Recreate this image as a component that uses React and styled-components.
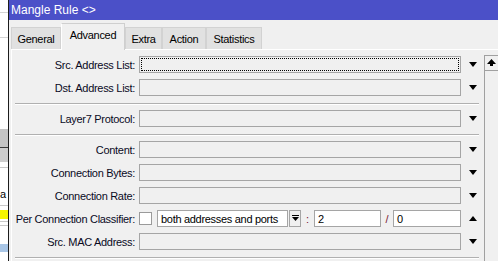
import React from 'react';
import styled, { createGlobalStyle } from 'styled-components';

const GlobalStyle = createGlobalStyle`
  * { box-sizing: border-box; }
  html, body { margin: 0; padding: 0; overflow: hidden; background: #fff; }
  body {
    font-family: "Liberation Sans", Arial, sans-serif;
    font-size: 11px;
    letter-spacing: -0.3px;
    color: #000;
  }
`;

const Desktop = styled.div`
  display: flex;
  width: 498px;
  height: 261px;
  overflow: hidden;
`;

// window lying behind the dialog, only a sliver shows
const BackWindow = styled.div`
  width: 8px;
  flex-shrink: 0;
  display: flex;
  flex-direction: column;
  background: #fff;
  overflow: hidden;
`;

const Band = styled.div`
  flex-shrink: 0;
  height: ${p => p.$h}px;
  background: ${p => p.$bg || '#fff'};
  border-bottom: ${p => (p.$line ? `1px solid ${p.$line}` : 'none')};
  font-size: 11px;
  line-height: ${p => p.$h}px;
  color: #000;
`;

const Window = styled.div`
  flex: 1;
  min-width: 0;
  display: flex;
  flex-direction: column;
  border-left: 1px solid #1c1c1c;
  background: #f0f0f0;
`;

const TitleBar = styled.div`
  height: 20px;
  flex-shrink: 0;
  display: flex;
  align-items: center;
  padding-left: 2px;
  background: #4b50c8;
  color: #fff;
  font-size: 12px;
  letter-spacing: 0;
`;

const TabStrip = styled.div`
  height: 29px;
  flex-shrink: 0;
  display: flex;
  align-items: flex-end;
  padding-left: 2px;
  position: relative;
  z-index: 1;
`;

const Tab = styled.div`
  width: ${p => p.$w}px;
  height: ${p => (p.$active ? 27 : 22)}px;
  margin-bottom: ${p => (p.$active ? -1 : 0)}px;
  display: flex;
  align-items: ${p => (p.$active ? 'flex-start' : 'center')};
  padding-top: ${p => (p.$active ? 5 : 0)}px;
  justify-content: center;
  background: ${p => (p.$active ? '#f0f0f0' : '#e1e1e1')};
  border: 1px solid ${p => (p.$active ? '#cfcfcf' : '#d2d2d2')};
  border-bottom: none;
  border-left: ${p => (p.$active ? '1px solid #fff' : '1px solid #d2d2d2')};
  white-space: nowrap;
`;

const Panel = styled.div`
  flex: 1;
  display: flex;
  margin-left: 2px;
  border-top: 1px solid #fff;
  border-left: 1px solid #fff;
`;

const Form = styled.div`
  flex: 1;
  display: flex;
  flex-direction: column;
  padding-top: 6px;
`;

const Row = styled.div`
  display: grid;
  grid-template-columns: 127px 322px 23px;
  align-items: center;
  height: 17px;
  margin-bottom: 6px;
  flex-shrink: 0;
`;

const Label = styled.div`
  text-align: right;
  padding-right: 4px;
  white-space: nowrap;
  color: #0a0a1e;
`;

const Field = styled.div`
  position: relative;
  height: 17px;
  border: 1px solid #a5a5a5;
  background: ${p => (p.$white ? '#fff' : '#f0f0f0')};
  display: flex;
  align-items: center;
  padding-left: 3px;
  white-space: nowrap;
  overflow: hidden;
  width: ${p => (p.$w ? `${p.$w}px` : 'auto')};
  flex: ${p => (p.$w ? '0 0 auto' : '1')};

  &::after {
    content: '';
    display: ${p => (p.$focus ? 'block' : 'none')};
    position: absolute;
    inset: 1px;
    border: 1px dotted #000;
  }
`;

const Arrow = styled.div`
  justify-self: center;
  width: 0;
  height: 0;
  margin-left: 1px;
  border-left: 4px solid transparent;
  border-right: 4px solid transparent;
  border-top: ${p => (p.$up ? 'none' : '5px solid #000')};
  border-bottom: ${p => (p.$up ? '5px solid #000' : 'none')};
`;

const Separator = styled.div`
  flex-shrink: 0;
  height: 2px;
  margin: 1px 5px 5px 3px;
  border-top: 1px solid #b0b0b0;
  border-bottom: 1px solid #fff;
`;

const Inline = styled.div`
  display: flex;
  align-items: center;
  height: 17px;
`;

const Check = styled.div`
  width: 13px;
  height: 13px;
  margin-right: 5px;
  background: #fff;
  border: 1px solid #9a9a9a;
  flex-shrink: 0;
`;

const DropButton = styled.div`
  width: 12px;
  height: 17px;
  margin-left: 1px;
  flex-shrink: 0;
  border: 1px solid #a5a5a5;
  background: #f0f0f0;
  display: flex;
  align-items: center;
  justify-content: center;
`;

const Divider = styled.div`
  width: ${p => p.$w}px;
  flex-shrink: 0;
  text-align: center;
  color: #7a2030;
`;

const ScrollBar = styled.div`
  width: 14px;
  flex-shrink: 0;
  margin-top: 5px;
  border-left: 1px solid #a0a0a0;
  border-top: 1px solid #a0a0a0;
`;

const ScrollButton = styled.div`
  height: 15px;
  border-bottom: 1px solid #a0a0a0;
  display: flex;
  align-items: center;
  justify-content: center;
`;

const tabs = [
  { name: 'General', w: 50 },
  { name: 'Advanced', w: 64, active: true },
  { name: 'Extra', w: 37 },
  { name: 'Action', w: 44 },
  { name: 'Statistics', w: 56 },
];

function SelectRow({ label, focus }) {
  return (
    <Row>
      <Label>{label}</Label>
      <Field $focus={focus} />
      <Arrow />
    </Row>
  );
}

export default function App() {
  return (
    <>
      <GlobalStyle />
      <Desktop>
        <BackWindow>
          <Band $h={13} $line="#d4d4d4" />
          <Band $h={25} $line="#d4d4d4" />
          <Band $h={91} />
          <Band $h={19} $bg="#c4c4c4" $line="#3a3a3a" />
          <Band $h={14} $bg="#cdcdcd" />
          <Band $h={6} $line="#c8c8c8" />
          <Band $h={20} />
          <Band $h={12}>a</Band>
          <Band $h={6} $line="#c8c8c8" />
          <Band $h={4} />
          <Band $h={9} $bg="#f5f500" />
          <Band $h={3} $line="#c8c8c8" />
          <Band $h={4} $line="#c8c8c8" />
          <Band $h={18} />
          <Band $h={8} $bg="#a9c6e6" />
        </BackWindow>

        <Window>
          <TitleBar>Mangle Rule &lt;&gt;</TitleBar>
          <TabStrip>
            {tabs.map(t => (
              <Tab key={t.name} $w={t.w} $active={t.active}>
                {t.name}
              </Tab>
            ))}
          </TabStrip>

          <Panel>
            <Form>
              <SelectRow label="Src. Address List:" focus />
              <SelectRow label="Dst. Address List:" />
              <Separator />
              <SelectRow label="Layer7 Protocol:" />
              <Separator />
              <SelectRow label="Content:" />
              <SelectRow label="Connection Bytes:" />
              <SelectRow label="Connection Rate:" />
              <Row>
                <Label>Per Connection Classifier:</Label>
                <Inline>
                  <Check />
                  <Field $white $w={131}>both addresses and ports</Field>
                  <DropButton>
                    <svg width="7" height="7" viewBox="0 0 7 7">
                      <rect x="0" y="0" width="7" height="1" fill="#000" />
                      <polygon points="0,2 7,2 3.5,6" fill="#000" />
                    </svg>
                  </DropButton>
                  <Divider $w={13}>:</Divider>
                  <Field $white $w={67}>2</Field>
                  <Divider $w={12}>/</Divider>
                  <Field $white>0</Field>
                </Inline>
                <Arrow $up />
              </Row>
              <SelectRow label="Src. MAC Address:" />
              <Separator />
            </Form>
            <ScrollBar>
              <ScrollButton>
                <svg width="9" height="8" viewBox="0 0 9 8">
                  <polygon points="4.5,0 9,5 6,5 6,7 3,7 3,5 0,5" fill="#000" />
                </svg>
              </ScrollButton>
            </ScrollBar>
          </Panel>
        </Window>
      </Desktop>
    </>
  );
}
